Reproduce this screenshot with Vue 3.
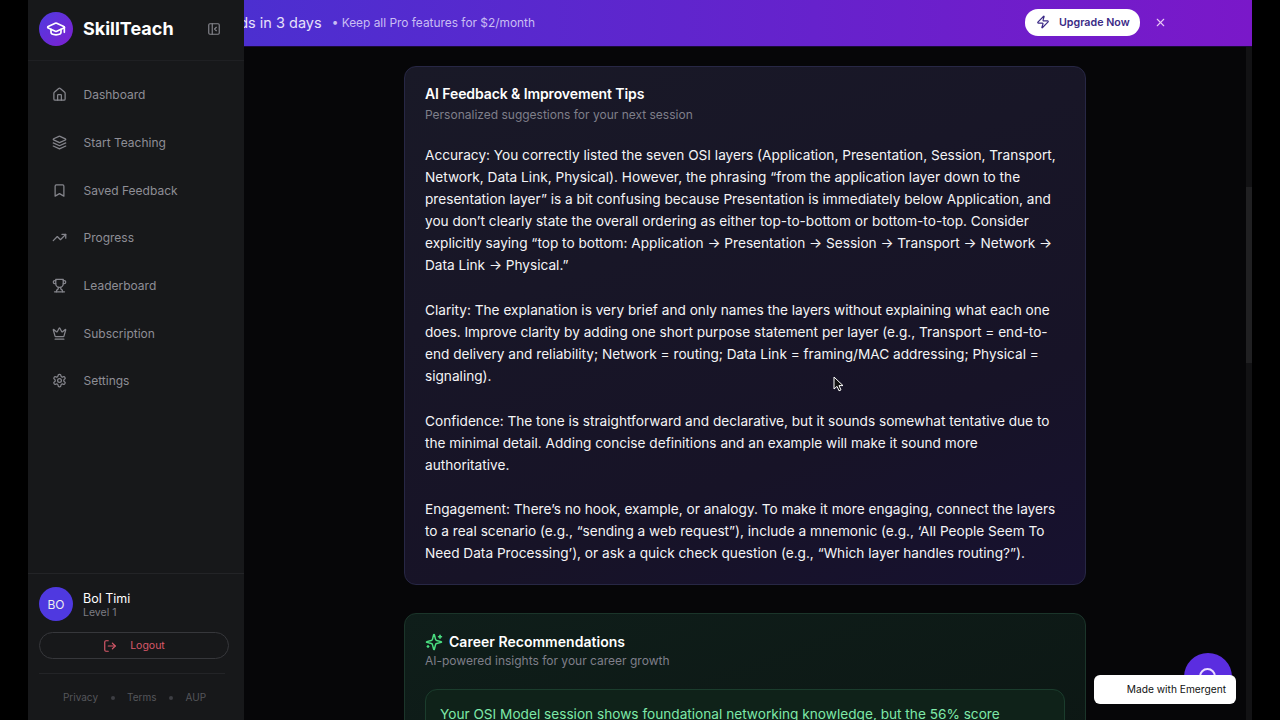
<template>
  <div class="frame">
    <aside class="sidebar">
      <div class="brand">
        <span class="brand-logo">
          <svg width="20" height="20" viewBox="0 0 24 24" class="ico" stroke="#fff" stroke-width="2">
            <path d="M21.42 10.922a1 1 0 0 0-.019-1.838L12.83 5.18a2 2 0 0 0-1.66 0L2.6 9.08a1 1 0 0 0 0 1.832l8.57 3.908a2 2 0 0 0 1.66 0z" />
            <path d="M22 10v6" />
            <path d="M6 12.5V16a6 3 0 0 0 12 0v-3.5" />
          </svg>
        </span>
        <span class="brand-name">SkillTeach</span>
        <svg class="ico collapse" width="14" height="14" viewBox="0 0 24 24" stroke="#85858c" stroke-width="2">
          <rect x="3" y="3" width="18" height="18" rx="2" />
          <path d="M9 3v18" />
          <path d="m16 15-3-3 3-3" />
        </svg>
      </div>

      <nav class="nav">
        <a v-for="item in navItems" :key="item.label" class="nav-item">
          <svg class="ico" width="15" height="15" viewBox="0 0 24 24" stroke="#85858c" stroke-width="2">
            <path v-for="d in item.paths" :key="d" :d="d" />
            <circle v-if="item.label === 'Settings'" cx="12" cy="12" r="3" />
          </svg>
          <span>{{ item.label }}</span>
        </a>
      </nav>

      <div class="account">
        <div class="user">
          <span class="avatar">BO</span>
          <div class="user-text">
            <div class="user-name">Bol Timi</div>
            <div class="user-level">Level 1</div>
          </div>
        </div>
        <button class="logout">
          <svg class="ico" width="14" height="14" viewBox="0 0 24 24" stroke="#d9596a" stroke-width="2">
            <path d="M9 21H5a2 2 0 0 1-2-2V5a2 2 0 0 1 2-2h4" />
            <path d="m16 17 5-5-5-5" />
            <path d="M21 12H9" />
          </svg>
          <span>Logout</span>
        </button>
      </div>

      <div class="legal">
        <span>Privacy</span><i></i><span>Terms</span><i></i><span>AUP</span>
      </div>
    </aside>

    <main class="main">
      <div class="banner">
        <span class="banner-title">Your Pro trial ends in 3 days</span>
        <span class="banner-note">• Keep all Pro features for $2/month</span>
        <button class="upgrade">
          <svg class="ico" width="14" height="14" viewBox="0 0 24 24" stroke="#3b2a86" stroke-width="2">
            <path d="M4 14a1 1 0 0 1-.78-1.63l9.9-10.2a.5.5 0 0 1 .86.46l-1.92 6.02A1 1 0 0 0 13 10h7a1 1 0 0 1 .78 1.63l-9.9 10.2a.5.5 0 0 1-.86-.46l1.92-6.02A1 1 0 0 0 11 14z" />
          </svg>
          <span>Upgrade Now</span>
        </button>
        <svg class="ico banner-close" width="13" height="13" viewBox="0 0 24 24" stroke="#e9c8f5" stroke-width="2">
          <path d="M18 6 6 18" />
          <path d="m6 6 12 12" />
        </svg>
      </div>

      <div class="scroller">
        <div class="content">
          <section class="card card-tips">
            <h2>AI Feedback &amp; Improvement Tips</h2>
            <p class="sub">Personalized suggestions for your next session</p>
            <div class="tips">
              <p v-for="tip in tips" :key="tip">{{ tip }}</p>
            </div>
          </section>

          <section class="card card-career">
            <div class="career-head">
              <svg class="ico" width="18" height="18" viewBox="0 0 24 24" stroke="#4ade80" stroke-width="2">
                <path d="M9.937 15.5A2 2 0 0 0 8.5 14.063l-6.135-1.582a.5.5 0 0 1 0-.962L8.5 9.936A2 2 0 0 0 9.937 8.5l1.582-6.135a.5.5 0 0 1 .963 0L14.063 8.5A2 2 0 0 0 15.5 9.937l6.135 1.581a.5.5 0 0 1 0 .964L15.5 14.063a2 2 0 0 0-1.437 1.437l-1.582 6.135a.5.5 0 0 1-.963 0z" />
                <path d="M20 3v4" />
                <path d="M22 5h-4" />
                <path d="M4 17v2" />
                <path d="M5 18H3" />
              </svg>
              <h2>Career Recommendations</h2>
            </div>
            <p class="sub career-sub">AI-powered insights for your career growth</p>
            <div class="career-box">
              Your OSI Model session shows foundational networking knowledge, but the 56% score
            </div>
          </section>
        </div>
        <div class="scrollbar"><div class="scroll-thumb"></div></div>
      </div>

      <!-- floating bits in the lower right corner -->
      <div class="chat-bubble">
        <span class="chat-ring"></span>
      </div>
      <div class="made-with">Made with Emergent</div>

      <svg class="cursor" width="11" height="16" viewBox="0 0 11 16">
        <path d="M1 1v12l3-2.6 2 4.4 2-.9-2-4.3h4z" fill="#111" stroke="#fff" stroke-width="1" />
      </svg>
    </main>
  </div>
</template>

<script setup>
const navItems = [
  {
    label: 'Dashboard',
    paths: [
      'M15 21v-8a1 1 0 0 0-1-1h-4a1 1 0 0 0-1 1v8',
      'M3 10a2 2 0 0 1 .709-1.528l7-5.999a2 2 0 0 1 2.582 0l7 5.999A2 2 0 0 1 21 10v9a2 2 0 0 1-2 2H5a2 2 0 0 1-2-2z'
    ]
  },
  {
    label: 'Start Teaching',
    paths: [
      'm12.83 2.18a2 2 0 0 0-1.66 0L2.6 6.08a1 1 0 0 0 0 1.83l8.58 3.91a2 2 0 0 0 1.66 0l8.58-3.9a1 1 0 0 0 0-1.83Z',
      'm22 17.65-9.17 4.16a2 2 0 0 1-1.66 0L2 17.65',
      'm22 12.65-9.17 4.16a2 2 0 0 1-1.66 0L2 12.65'
    ]
  },
  {
    label: 'Saved Feedback',
    paths: ['m19 21-7-4-7 4V5a2 2 0 0 1 2-2h10a2 2 0 0 1 2 2v16z']
  },
  {
    label: 'Progress',
    paths: ['M22 7 13.5 15.5 8.5 10.5 2 17', 'M16 7h6v6']
  },
  {
    label: 'Leaderboard',
    paths: [
      'M6 9H4.5a2.5 2.5 0 0 1 0-5H6',
      'M18 9h1.5a2.5 2.5 0 0 0 0-5H18',
      'M4 22h16',
      'M10 14.66V17c0 .55-.47.98-.97 1.21C7.85 18.75 7 20.24 7 22',
      'M14 14.66V17c0 .55.47.98.97 1.21C16.15 18.75 17 20.24 17 22',
      'M18 2H6v7a6 6 0 0 0 12 0V2Z'
    ]
  },
  {
    label: 'Subscription',
    paths: [
      'M11.562 3.266a.5.5 0 0 1 .876 0L15.39 8.87a1 1 0 0 0 1.516.294L21.183 5.5a.5.5 0 0 1 .798.519l-2.834 10.246a1 1 0 0 1-.956.734H5.81a1 1 0 0 1-.957-.734L2.02 6.02a.5.5 0 0 1 .798-.519l4.276 3.664a1 1 0 0 0 1.516-.294z',
      'M5 21h14'
    ]
  },
  {
    label: 'Settings',
    paths: [
      'M12.22 2h-.44a2 2 0 0 0-2 2v.18a2 2 0 0 1-1 1.73l-.43.25a2 2 0 0 1-2 0l-.15-.08a2 2 0 0 0-2.73.73l-.22.38a2 2 0 0 0 .73 2.73l.15.1a2 2 0 0 1 1 1.72v.51a2 2 0 0 1-1 1.74l-.15.09a2 2 0 0 0-.73 2.73l.22.38a2 2 0 0 0 2.73.73l.15-.08a2 2 0 0 1 2 0l.43.25a2 2 0 0 1 1 1.73V20a2 2 0 0 0 2 2h.44a2 2 0 0 0 2-2v-.18a2 2 0 0 1 1-1.73l.43-.25a2 2 0 0 1 2 0l.15.08a2 2 0 0 0 2.73-.73l.22-.39a2 2 0 0 0-.73-2.73l-.15-.08a2 2 0 0 1-1-1.74v-.5a2 2 0 0 1 1-1.74l.15-.09a2 2 0 0 0 .73-2.73l-.22-.38a2 2 0 0 0-2.73-.73l-.15.08a2 2 0 0 1-2 0l-.43-.25a2 2 0 0 1-1-1.73V4a2 2 0 0 0-2-2z'
    ]
  }
];

const tips = [
  'Accuracy: You correctly listed the seven OSI layers (Application, Presentation, Session, Transport, Network, Data Link, Physical). However, the phrasing “from the application layer down to the presentation layer” is a bit confusing because Presentation is immediately below Application, and you don’t clearly state the overall ordering as either top-to-bottom or bottom-to-top. Consider explicitly saying “top to bottom: Application → Presentation → Session → Transport → Network → Data Link → Physical.”',
  'Clarity: The explanation is very brief and only names the layers without explaining what each one does. Improve clarity by adding one short purpose statement per layer (e.g., Transport = end-to-end delivery and reliability; Network = routing; Data Link = framing/MAC addressing; Physical = signaling).',
  'Confidence: The tone is straightforward and declarative, but it sounds somewhat tentative due to the minimal detail. Adding concise definitions and an example will make it sound more authoritative.',
  'Engagement: There’s no hook, example, or analogy. To make it more engaging, connect the layers to a real scenario (e.g., “sending a web request”), include a mnemonic (e.g., ‘All People Seem To Need Data Processing’), or ask a quick check question (e.g., “Which layer handles routing?”).'
];
</script>

<style>
html, body {
  background: #000;
  overflow: hidden;
}
</style>

<style scoped>
.frame {
  display: flex;
  width: 1224px;
  height: 720px;
  margin-left: 28px;
  overflow: hidden;
  background: #060608;
  font-family: Inter, "Liberation Sans", sans-serif;
}
.ico {
  fill: none;
  stroke-linecap: round;
  stroke-linejoin: round;
  flex: none;
}

/* sidebar */
.sidebar {
  width: 216px;
  flex: none;
  display: flex;
  flex-direction: column;
  background: #17181a;
  position: relative;
  z-index: 2;
}
.brand {
  height: 61px;
  flex: none;
  display: flex;
  align-items: center;
  padding: 0 23px 3px 11px;
  border-bottom: 1px solid #1f2023;
  box-sizing: border-box;
}
.brand-logo {
  width: 34px;
  height: 34px;
  border-radius: 50%;
  display: flex;
  align-items: center;
  justify-content: center;
  background: linear-gradient(135deg, #4f3be0, #7e1fd0);
}
.brand-name {
  margin-left: 10px;
  font-size: 18px;
  font-weight: 700;
  color: #fff;
  flex: 1;
}
.nav {
  flex: 1;
  display: flex;
  flex-direction: column;
  padding-top: 10px;
}
.nav-item {
  height: 47.7px;
  flex: none;
  display: flex;
  align-items: center;
  gap: 16.5px;
  padding-left: 24px;
  font-size: 12px;
  color: #8e8e96;
}
.account {
  padding: 13px 15px 14px 11px;
  border-top: 1px solid #232427;
}
.user {
  display: flex;
  align-items: center;
  gap: 10px;
}
.avatar {
  width: 34px;
  height: 34px;
  border-radius: 50%;
  background: #4f39e0;
  color: #eee;
  font-size: 12px;
  display: flex;
  align-items: center;
  justify-content: center;
}
.user-text {
  padding-top: 2px;
}
.user-name {
  font-size: 12.5px;
  color: #fff;
  line-height: 16px;
}
.user-level {
  font-size: 10.5px;
  color: #7d7d84;
  line-height: 13px;
  margin-top: -1px;
}
.logout {
  width: 100%;
  height: 27px;
  margin-top: 11px;
  display: flex;
  align-items: center;
  justify-content: center;
  gap: 13px;
  background: none;
  border: 1px solid #36373b;
  border-radius: 14px;
  color: #d9596a;
  font-family: inherit;
  font-size: 10.5px;
  padding: 0;
}
.legal {
  flex: none;
  height: 47px;
  margin: 0 19px 0 11px;
  box-sizing: border-box;
  border-top: 1px solid #232427;
  display: flex;
  align-items: center;
  justify-content: center;
  gap: 12.5px;
  font-size: 10px;
  color: #55565b;
  padding-left: 5px;
}
.legal i {
  width: 4px;
  height: 4px;
  border-radius: 50%;
  background: #3d3e43;
  margin-top: 2px;
}

/* main column */
.main {
  flex: 1;
  min-width: 0;
  display: flex;
  flex-direction: column;
  position: relative;
}
.banner {
  height: 47px;
  flex: none;
  display: flex;
  align-items: center;
  justify-content: flex-end;
  padding: 0 85px 2px 0;
  background: linear-gradient(90deg, #4c2fd0, #7a18c9);
  white-space: nowrap;
  border-bottom: 1px solid #1a0a3a;
  box-sizing: border-box;
  overflow: hidden;
}
.banner-title {
  font-size: 14.5px;
  color: #e6e0fa;
  margin-right: 10px;
}
.banner-note {
  font-size: 11.9px;
  color: #c9bdf3;
  margin-right: 490px;
}
.upgrade {
  height: 27px;
  width: 115px;
  flex: none;
  display: flex;
  align-items: center;
  gap: 9px;
  padding: 0 0 0 11px;
  background: #fff;
  border: 0;
  border-radius: 13px;
  color: #3b2a86;
  font-family: inherit;
  font-size: 10.7px;
  font-weight: 600;
}
.banner-close {
  margin-left: 14px;
}
.scroller {
  flex: 1;
  min-height: 0;
  display: flex;
  overflow: hidden;
}
.content {
  flex: 1;
  min-width: 0;
  padding: 19px 1px 0 0;
}
.scrollbar {
  width: 6px;
  flex: none;
  background: #121214;
  padding-top: 140px;
  box-sizing: border-box;
}
.scroll-thumb {
  height: 176px;
  background: #202022;
}
.card {
  width: 682px;
  margin: 0 auto;
  box-sizing: border-box;
  border-radius: 12px;
  padding: 17px 20px 17px 20.5px;
}
.card h2 {
  margin: 0;
  font-size: 14px;
  line-height: 20px;
  font-weight: 600;
  color: #fff;
  letter-spacing: -0.1px;
}
.sub {
  margin: 1px 0 0;
  font-size: 12px;
  line-height: 19px;
  color: #7f7f8a;
}
.card-tips {
  height: 519px;
  border: 1px solid #272745;
  background: linear-gradient(160deg, #191927, #171327 70%, #171130);
}
.tips {
  margin-top: 20px;
}
.tips p {
  margin: 0 0 22.8px;
  font-size: 13.65px;
  line-height: 22px;
  color: #f4f4f6;
}
.card-career {
  margin-top: 28px;
  height: 200px;
  border: 1px solid #1b352a;
  background: linear-gradient(160deg, #0f1e1a, #0c1613);
}
.career-head {
  display: flex;
  align-items: center;
  gap: 6px;
  padding-top: 1px;
}
.card-career h2 {
  letter-spacing: 0.03px;
}
.career-sub {
  margin-top: -1px;
}
.career-box {
  margin-top: 19px;
  padding: 13px 14px;
  height: 120px;
  box-sizing: border-box;
  border: 1px solid #1b3d2d;
  border-radius: 12px;
  background: #0f2219;
  font-size: 13.65px;
  line-height: 22px;
  color: #7ee8a8;
}

/* floating */
.chat-bubble {
  position: absolute;
  left: 940px;
  top: 653px;
  width: 48px;
  height: 48px;
  border-radius: 50%;
  background: #5b2de0;
}
.chat-ring {
  position: absolute;
  left: 15px;
  top: 15px;
  width: 17px;
  height: 17px;
  box-sizing: border-box;
  border: 2px solid #eadcff;
  border-radius: 50%;
}
.made-with {
  position: absolute;
  left: 850px;
  top: 675px;
  width: 142px;
  height: 29px;
  box-sizing: border-box;
  padding: 0 10px 1px 0;
  display: flex;
  align-items: center;
  justify-content: flex-end;
  background: #fff;
  border-radius: 6px;
  color: #111;
  font-size: 10.2px;
  font-weight: 400;
}
.cursor {
  position: absolute;
  left: 589px;
  top: 376px;
}
</style>
